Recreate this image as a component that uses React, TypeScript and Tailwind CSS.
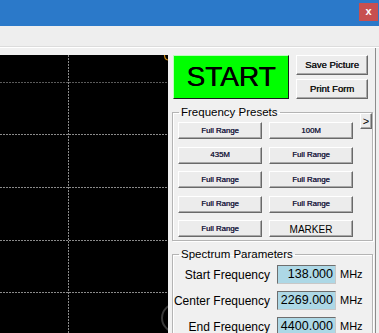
import React from "react";

const font = "font-['Liberation_Sans',Arial,sans-serif]";

const btn =
  "flex items-center justify-center bg-[#ececec] border border-t-white border-l-white border-r-[#696969] border-b-[#696969] shadow-[inset_-1px_-1px_0_#a8a8a8]";

// small dialog text renders heavier on the original (ClearType)
const heavy = "[text-shadow:0.35px_0_0_currentColor]";

const presets = [
  "Full Range",
  "100M",
  "435M",
  "Full Range",
  "Full Range",
  "Full Range",
  "Full Range",
  "Full Range",
  "Full Range",
  "MARKER",
];

const params = [
  { label: "Start Frequency", value: "138.000" },
  { label: "Center Frequency", value: "2269.000" },
  { label: "End Frequency", value: "4400.000" },
];

const Chart: React.FC = () => {
  const hLines = [27, 79, 132, 185, 237];
  return (
    <svg width={168} height={278} className="block bg-black">
      {hLines.map((y, i) => (
        <line
          key={y}
          x1={0}
          x2={168}
          y1={y + 0.5}
          y2={y + 0.5}
          stroke={i === 0 ? "#5a5a5a" : "#8a8a8a"}
          strokeWidth={1}
          strokeDasharray="2 1"
        />
      ))}
      <line x1={68.5} x2={68.5} y1={0} y2={278} stroke="#8a8a8a" strokeDasharray="2 1" />
      <path d="M164.5 0 Q164.5 4.5 168 5" fill="none" stroke="#d08a10" strokeWidth={1.2} />
      <circle cx={176} cy={263} r={14} fill="none" stroke="#3a3a3a" strokeWidth={2} />
    </svg>
  );
};

export default function App() {
  return (
    <div className={`w-[379px] h-[333px] overflow-hidden bg-[#f0f0f0] ${font}`}>
      {/* title bar */}
      <div className="h-[26px] bg-[#2b79c9] flex justify-end items-start pt-[3px] pr-[1px]">
        <div className="w-[19px] h-[18px] bg-[#c75050] flex items-center justify-center text-white text-[11px] font-bold leading-none pb-[2px]">
          x
        </div>
      </div>
      {/* toolbar band */}
      <div className="h-[21px] bg-[#eeeeee] border-b border-[#dcdcdc]" />

      <div className="flex h-[286px] border-t border-white">
        <div className="w-[168px] pt-[7px]">
          <Chart />
        </div>

        <div className="w-[207px] pt-[7px]">
          <div className="flex pl-[5px] gap-[7px]">
            <div className="w-[116px] h-[44px] bg-[#00ff00] border border-t-[#b8ffb8] border-l-[#b8ffb8] border-r-[#1a1a1a] border-b-[#1a1a1a] flex items-center justify-center text-[28px] leading-none text-black [text-shadow:0.4px_0_0_#000]">
              START
            </div>
            <div className="flex flex-col gap-[4px]">
              <div className={`${btn} ${heavy} w-[72px] h-[20px] text-[9.5px] text-[#111]`}>Save Picture</div>
              <div className={`${btn} ${heavy} w-[72px] h-[20px] text-[9.5px] text-[#111]`}>Print Form</div>
            </div>
          </div>

          <div className="relative ml-[4px] mt-[6px] w-[201px]">
            <fieldset className="border border-[#b4b4b4] shadow-[inset_1px_1px_0_#fff,1px_1px_0_#fff] pt-[3px] pb-[3px]">
              <legend className="ml-[6px] px-[2px] text-[11.5px] leading-[14px] text-black">
                Frequency Presets
              </legend>
              <div className="grid grid-cols-[84px_84px] gap-x-[7px] gap-y-[7.5px] ml-[5px]">
                {presets.map((p, i) => (
                  <div
                    key={i}
                    className={`${btn} h-[17px] ${
                      p === "MARKER"
                        ? "text-[10px] text-black pt-[2px]"
                        : `text-[7.8px] text-[#1c2040] ${heavy}`
                    }`}
                  >
                    {p}
                  </div>
                ))}
              </div>
            </fieldset>
            <div
              className={`${btn} absolute left-[188px] top-[8px] w-[12px] h-[16px] text-[11px] text-black`}
            >
              &gt;
            </div>
          </div>

          <div className="ml-[4px] mt-[6px] w-[201px]">
            <fieldset className="border border-[#b4b4b4] shadow-[inset_1px_1px_0_#fff,1px_1px_0_#fff] pt-[4px] pb-[6px]">
              <legend className="ml-[6px] px-[2px] text-[11.5px] leading-[14px] text-black">
                Spectrum Parameters
              </legend>
              <div className="flex flex-col gap-[7px]">
                {params.map((r) => (
                  <div key={r.label} className="flex items-center">
                    <div className="w-[97px] text-right text-[12px] text-black whitespace-nowrap">{r.label}</div>
                    <div className="ml-[7px] w-[59px] h-[19px] bg-[#add8e6] border border-t-[#6e6e6e] border-l-[#6e6e6e] border-r-[#c8c8c8] border-b-[#c8c8c8] flex items-center justify-end pr-[2px] text-[12.5px] text-black">
                      {r.value}
                    </div>
                    <div className="ml-[4px] text-[11px] text-black">MHz</div>
                  </div>
                ))}
              </div>
            </fieldset>
          </div>
        </div>

        <div className="w-px bg-[#8c8c8c]" />
        <div className="flex-1 bg-[#f0f0f0]" />
      </div>
    </div>
  );
}
